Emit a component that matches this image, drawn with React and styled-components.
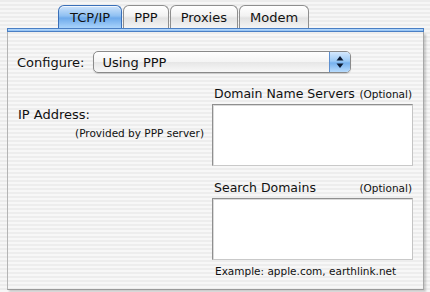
import React from 'react';
import styled, { createGlobalStyle } from 'styled-components';

const Global = createGlobalStyle`
  html, body {
    margin: 0;
    padding: 0;
  }
  body {
    width: 430px;
    height: 292px;
    overflow: hidden;
    font-family: "DejaVu Sans", "Liberation Sans", sans-serif;
    color: #111;
    background: repeating-linear-gradient(180deg, #ececec 0px, #ececec 2px, #f6f6f6 2px, #f6f6f6 4px);
  }
`;

const stripes = `repeating-linear-gradient(180deg, #ededed 0px, #ededed 2px, #f7f7f7 2px, #f7f7f7 4px)`;

const TABS = ['TCP/IP', 'PPP', 'Proxies', 'Modem'];

export default function App() {
    return (
        <>
            <Global />
            <Window>
                <TabBar>
                    {TABS.map((t, i) => (
                        <Tab key={t} active={i === 0}>{t}</Tab>
                    ))}
                </TabBar>
                <Strip />
                <Panel>
                    <ConfigureRow>
                        <Label>Configure:</Label>
                        <Popup>
                            <PopupText>Using PPP</PopupText>
                            <PopupArrows>
                                <svg width="8" height="12" viewBox="0 0 8 12">
                                    <path d="M4 0 L7.5 4.5 L0.5 4.5 Z" fill="#0b1a33" />
                                    <path d="M4 12 L7.5 7.5 L0.5 7.5 Z" fill="#0b1a33" />
                                </svg>
                            </PopupArrows>
                        </Popup>
                    </ConfigureRow>
                    <Body>
                        <LeftCol>
                            <Label>IP Address:</Label>
                            <Note>(Provided by PPP server)</Note>
                        </LeftCol>
                        <RightCol>
                            <FieldHead>
                                <span>Domain Name Servers</span>
                                <Small>(Optional)</Small>
                            </FieldHead>
                            <TextArea />
                            <FieldHead spaced>
                                <span>Search Domains</span>
                                <Small>(Optional)</Small>
                            </FieldHead>
                            <TextArea />
                            <Example>Example: apple.com, earthlink.net</Example>
                        </RightCol>
                    </Body>
                </Panel>
            </Window>
        </>
    );
}

const Window = styled.div`
  display: flex;
  flex-direction: column;
  padding: 5px 6px 0 7px;
`;

const TabBar = styled.div`
  display: flex;
  padding-left: 51px;
  gap: 1px;
  height: 23px;
`;

const Tab = styled.div`
  height: 23px;
  box-sizing: border-box;
  padding: 0 ${({ active }) => (active ? '11px' : '10px')};
  display: flex;
  align-items: center;
  font-size: 13px;
  border: 1px solid ${({ active }) => (active ? '#3a6fb8' : '#8e8e8e')};
  border-bottom: none;
  border-radius: 6px 6px 0 0;
  color: #111;
  background: ${({ active }) =>
        active
            ? 'linear-gradient(180deg, #cfe4fb 0%, #8fc0f2 45%, #6eaaeb 55%, #a9d3fb 100%)'
            : 'linear-gradient(180deg, #ffffff 0%, #f2f2f2 45%, #e2e2e2 55%, #f4f4f4 100%)'};
  box-shadow: inset 0 1px 0 rgba(255, 255, 255, 0.7);
`;

const Strip = styled.div`
  height: 4px;
  box-sizing: border-box;
  border: 1px solid #4a7fc4;
  background: linear-gradient(180deg, #bcdcfb, #8cbef3);
`;

const Panel = styled.div`
  height: 258px;
  box-sizing: border-box;
  background: ${stripes};
  border-left: 1px solid #b4b4b4;
  border-right: 1px solid #a8a8a8;
  border-bottom: 1px solid #9a9a9a;
  box-shadow: 2px 2px 2px rgba(0, 0, 0, 0.18);
  padding: 19px 10px 0 9px;
  display: flex;
  flex-direction: column;
`;

const ConfigureRow = styled.div`
  display: flex;
  align-items: center;
  gap: 9px;
`;

const Label = styled.div`
  font-size: 13px;
  color: #111;
`;

const Popup = styled.div`
  width: 258px;
  height: 22px;
  box-sizing: border-box;
  display: flex;
  border: 1px solid #8a8a8a;
  border-radius: 5px;
  overflow: hidden;
  background: linear-gradient(180deg, #ffffff 0%, #f4f4f4 50%, #e6e6e6 51%, #f8f8f8 100%);
  box-shadow: 0 1px 1px rgba(0, 0, 0, 0.15);
`;

const PopupText = styled.div`
  flex: 1;
  display: flex;
  align-items: center;
  padding-left: 8px;
  font-size: 13px;
`;

const PopupArrows = styled.div`
  width: 20px;
  display: flex;
  align-items: center;
  justify-content: center;
  border-left: 1px solid #5d8fcf;
  background: linear-gradient(180deg, #d4e8fd 0%, #9ccaf6 45%, #76b1ee 55%, #b9dcfd 100%);
`;

const Body = styled.div`
  display: flex;
  justify-content: space-between;
  margin-top: 13px;
`;

const LeftCol = styled.div`
  display: flex;
  flex-direction: column;
  align-items: flex-end;
  padding-top: 21px;
  width: 187px;
  & > ${Label} {
    align-self: flex-start;
    padding-left: 1px;
  }
`;

const Note = styled.div`
  font-size: 10.5px;
  margin-top: 5px;
  color: #111;
`;

const RightCol = styled.div`
  width: 201px;
  display: flex;
  flex-direction: column;
`;

const FieldHead = styled.div`
  display: flex;
  justify-content: space-between;
  align-items: baseline;
  font-size: 12.5px;
  padding: 0 1px 0 2px;
  margin-top: ${({ spaced }) => (spaced ? '14px' : '0')};
  height: 16px;
`;

const Small = styled.span`
  font-size: 10.5px;
`;

const TextArea = styled.div`
  height: 62px;
  margin-top: 2px;
  box-sizing: border-box;
  background: #fff;
  border: 1px solid #8f8f8f;
  border-right-color: #c4c4c4;
  border-bottom-color: #c9c9c9;
  box-shadow: inset 1px 1px 0 #dadada;
`;

const Example = styled.div`
  font-size: 10.5px;
  margin-top: 5px;
  padding-left: 3px;
`;
